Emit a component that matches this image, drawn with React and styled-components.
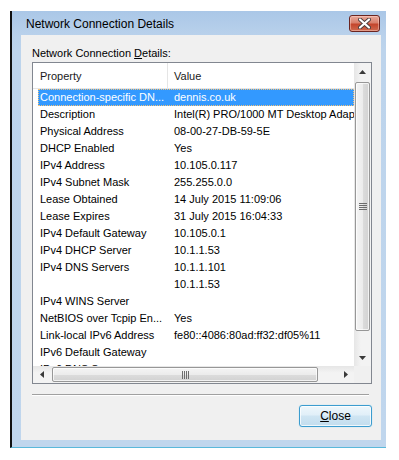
import React from 'react'
import styled, { createGlobalStyle } from 'styled-components'

const GlobalStyle = createGlobalStyle`
  html, body {
    margin: 0;
    padding: 0;
    background: #fff;
  }
  body {
    font-family: "Liberation Sans", Arial, sans-serif;
    font-size: 12px;
    color: #000;
  }
`

const Page = styled.div`
  padding: 11px 0 0 10px;
  width: 399px;
  height: 460px;
  box-sizing: border-box;
`

const Window = styled.div`
  width: 376px;
  box-sizing: border-box;
  border-left: 2px solid #111;
  border-bottom: 1px solid #5ab8da;
  background: linear-gradient(to bottom, #b3cde9 0px, #bdd4ec 40px, #c0d6ed 100%);
  padding-bottom: 7px;
`

const TitleBar = styled.div`
  height: 24px;
  display: flex;
  align-items: flex-start;
  justify-content: space-between;
  padding: 0 6px 0 14px;
  background: linear-gradient(to bottom, #aac7e7, #b9d1eb);
`

const Title = styled.div`
  font-size: 12px;
  line-height: 15px;
  padding-top: 6px;
  color: #000;
`

const CloseX = styled.div`
  margin-top: 4px;
  width: 31px;
  height: 17px;
  box-sizing: border-box;
  border: 1px solid #6b2420;
  border-radius: 3px;
  background: linear-gradient(to bottom, #e9a99b 0%, #d9806c 45%, #c4452c 55%, #cf6a50 100%);
  box-shadow: inset 0 0 0 1px rgba(255, 220, 210, 0.45);
  display: flex;
  align-items: center;
  justify-content: center;
`

const Client = styled.div`
  margin: 0 5px 0 9px;
  background: #f0f0f0;
  padding: 11px 0 13px 11px;
  display: flex;
  flex-direction: column;
  font-size: 11px;
`

const Label = styled.div`
  line-height: 15px;
  margin-bottom: 1px;
`

const ListBox = styled.div`
  width: 340px;
  height: 322px;
  box-sizing: border-box;
  border: 1px solid #828790;
  background: #fff;
  display: grid;
  grid-template-columns: 1fr 17px;
  grid-template-rows: 1fr 17px;
`

const Viewport = styled.div`
  overflow: hidden;
  white-space: nowrap;
`

const Header = styled.div`
  height: 26px;
  display: flex;
  align-items: stretch;
  border-bottom: 1px solid #e5e5e5;
  box-sizing: border-box;
  background: #fff;
`

const HeaderCell = styled.div`
  width: ${p => p.$width || 'auto'};
  flex: ${p => (p.$width ? 'none' : '1')};
  box-sizing: border-box;
  padding-left: ${p => p.$pad}px;
  display: flex;
  align-items: center;
  color: #1a1a1a;
  border-right: ${p => (p.$width ? '1px solid #e5e5e5' : 'none')};
`

const Row = styled.div`
  margin-left: 5px;
  height: 17px;
  line-height: 17px;
  display: grid;
  grid-template-columns: 130px 1fr;
  box-sizing: border-box;
  background: ${p => (p.$selected ? '#3399ff' : 'transparent')};
  color: ${p => (p.$selected ? '#fff' : '#000')};
  outline: ${p => (p.$selected ? '1px dotted #f3c27a' : 'none')};
  outline-offset: -1px;
`

const Cell = styled.div`
  padding-left: ${p => p.$pad}px;
  white-space: nowrap;
`

const VScroll = styled.div`
  display: flex;
  flex-direction: column;
  background: linear-gradient(to right, #e6e6e6, #f3f3f3 40%, #f3f3f3);
`

const HScroll = styled.div`
  display: flex;
  background: linear-gradient(to bottom, #e6e6e6, #f3f3f3 40%, #f3f3f3);
`

const ArrowBox = styled.div`
  width: 17px;
  height: 17px;
  flex: none;
  display: flex;
  align-items: center;
  justify-content: center;
`

const Track = styled.div`
  flex: 1;
  display: flex;
  flex-direction: ${p => (p.$vertical ? 'column' : 'row')};
  padding: ${p => (p.$vertical ? '2px 1px 17px 1px' : '1px 18px 1px 2px')};
`

const Thumb = styled.div`
  flex: none;
  ${p => (p.$vertical ? 'height: 249px;' : 'width: 266px;')}
  box-sizing: border-box;
  border: 1px solid #979797;
  border-radius: 2px;
  background: ${p =>
    p.$vertical
      ? 'linear-gradient(to right, #f4f4f4, #ececec 50%, #dcdcdc 51%, #d2d2d2)'
      : 'linear-gradient(to bottom, #f4f4f4, #ececec 50%, #dcdcdc 51%, #d2d2d2)'};
  box-shadow: inset 0 0 0 1px rgba(255, 255, 255, 0.7);
  display: flex;
  align-items: center;
  justify-content: center;
`

const Corner = styled.div`
  background: #f0f0f0;
`

const Separator = styled.div`
  width: 337px;
  margin-top: 10px;
  border-top: 1px solid #a0a0a0;
  border-bottom: 1px solid #fff;
`

const Footer = styled.div`
  width: 340px;
  margin-top: 9px;
  display: flex;
  justify-content: flex-end;
`

const Button = styled.div`
  width: 73px;
  height: 22px;
  box-sizing: border-box;
  border: 1px solid #3c9ccf;
  border-radius: 3px;
  background: linear-gradient(to bottom, #eef7fc 0%, #e1eff8 45%, #cfe5f3 50%, #c2ddee 100%);
  box-shadow: inset 0 0 0 1px rgba(255, 255, 255, 0.75), 0 0 1px #7fd1f1;
  display: flex;
  align-items: center;
  justify-content: center;
  color: #000;
  font-size: 12px;
`

const rows = [
  ['Connection-specific DN...', 'dennis.co.uk'],
  ['Description', 'Intel(R) PRO/1000 MT Desktop Adapter'],
  ['Physical Address', '08-00-27-DB-59-5E'],
  ['DHCP Enabled', 'Yes'],
  ['IPv4 Address', '10.105.0.117'],
  ['IPv4 Subnet Mask', '255.255.0.0'],
  ['Lease Obtained', '14 July 2015 11:09:06'],
  ['Lease Expires', '31 July 2015 16:04:33'],
  ['IPv4 Default Gateway', '10.105.0.1'],
  ['IPv4 DHCP Server', '10.1.1.53'],
  ['IPv4 DNS Servers', '10.1.1.101'],
  ['', '10.1.1.53'],
  ['IPv4 WINS Server', ''],
  ['NetBIOS over Tcpip En...', 'Yes'],
  ['Link-local IPv6 Address', 'fe80::4086:80ad:ff32:df05%11'],
  ['IPv6 Default Gateway', ''],
  ['IPv6 DNS Servers', ''],
]

// tiny scroll arrow triangles
const Arrow = ({ dir }) => {
  const pts = {
    up: '0,4 3.5,0 7,4',
    down: '0,0 3.5,4 7,0',
    left: '4,0 0,3.5 4,7',
    right: '0,0 4,3.5 0,7',
  }[dir]
  const vert = dir === 'up' || dir === 'down'
  return (
    <svg width={vert ? 7 : 4} height={vert ? 4 : 7} viewBox={vert ? '0 0 7 4' : '0 0 4 7'}>
      <polygon points={pts} fill="#3a3a3a" />
    </svg>
  )
}

const Grip = ({ vertical }) => (
  <svg width={vertical ? 8 : 7} height={vertical ? 7 : 8}>
    {[0, 2, 4, 6].map(i =>
      vertical ? (
        <line key={i} x1="0" y1={i + 0.5} x2="8" y2={i + 0.5} stroke="#6d6d6d" />
      ) : (
        <line key={i} x1={i + 0.5} y1="0" x2={i + 0.5} y2="8" stroke="#6d6d6d" />
      )
    )}
  </svg>
)

const App = () => (
  <Page>
    <GlobalStyle />
    <Window>
      <TitleBar>
        <Title>Network Connection Details</Title>
        <CloseX>
          <svg width="13" height="11" viewBox="0 0 13 11">
            <path d="M2 1.5 L11 9.5 M11 1.5 L2 9.5" stroke="#4a3c3c" strokeWidth="4" strokeLinecap="round" />
            <path d="M2 1.5 L11 9.5 M11 1.5 L2 9.5" stroke="#fff" strokeWidth="2.2" strokeLinecap="round" />
          </svg>
        </CloseX>
      </TitleBar>
      <Client>
        <Label>
          Network Connection <u>D</u>etails:
        </Label>
        <ListBox>
          <Viewport>
            <Header>
              <HeaderCell $width="135px" $pad={7}>Property</HeaderCell>
              <HeaderCell $pad={6}>Value</HeaderCell>
            </Header>
            {rows.map(([k, v], i) => (
              <Row key={i} $selected={i === 0}>
                <Cell $pad={2}>{k}</Cell>
                <Cell $pad={6}>{v}</Cell>
              </Row>
            ))}
          </Viewport>
          <VScroll>
            <ArrowBox><Arrow dir="up" /></ArrowBox>
            <Track $vertical>
              <Thumb $vertical><Grip vertical /></Thumb>
            </Track>
            <ArrowBox><Arrow dir="down" /></ArrowBox>
          </VScroll>
          <HScroll>
            <ArrowBox><Arrow dir="left" /></ArrowBox>
            <Track>
              <Thumb><Grip /></Thumb>
            </Track>
            <ArrowBox><Arrow dir="right" /></ArrowBox>
          </HScroll>
          <Corner />
        </ListBox>
        <Separator />
        <Footer>
          <Button>
            <span><u>C</u>lose</span>
          </Button>
        </Footer>
      </Client>
    </Window>
  </Page>
)

export default App
